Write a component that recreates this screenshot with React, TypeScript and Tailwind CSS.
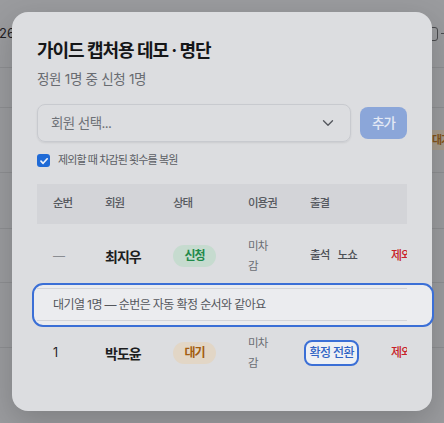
import React from "react";

function Check() {
  return (
    <span className="flex h-[13px] w-[13px] shrink-0 items-center justify-center rounded-[3px] bg-[#1f6ad6]">
      <svg width="10" height="10" viewBox="0 0 10 10" fill="none">
        <path d="M2 5.2 4.1 7.3 8.2 2.8" stroke="#eef2fa" strokeWidth="1.7" strokeLinecap="round" strokeLinejoin="round" />
      </svg>
    </span>
  );
}

function Chevron() {
  return (
    <svg width="18" height="18" viewBox="0 0 24 24" fill="none">
      <path d="m6 9 6 6 6-6" stroke="#55585e" strokeWidth="1.8" strokeLinecap="round" strokeLinejoin="round" />
    </svg>
  );
}

const grid = "grid grid-cols-[52px_68px_75px_62px_81px_60px] w-max";

export default function App() {
  return (
    <div className="relative h-[423px] w-[444px] overflow-hidden bg-[#9a9b9e] font-['Inter','Noto_Sans_CJK_KR',sans-serif]">
      {/* dimmed page underneath */}
      <div className="flex flex-col">
        <div className="flex h-[68px] items-center border-b border-[#8d8e91]">
          <span className="ml-[-1px] text-[13px] text-[#1f2023]">26</span>
          <span className="ml-auto h-[14px] w-[14px] shrink-0 rounded-[3px] border border-[#4a4b4e]" />
          <span className="ml-[3px] h-px w-[3px] shrink-0 bg-[#4a4b4e]" />
        </div>
        <div className="h-[40px] border-b border-[#8d8e91]" />
        <div className="flex h-[65px] items-center border-b border-[#8d8e91] pl-[426px]">
          <span className="flex h-[20px] w-[40px] shrink-0 items-center whitespace-nowrap rounded-[4px] bg-[#a69b8b] pl-[6px] text-[11px] font-semibold tracking-[-1px] text-[#83531a]">대기</span>
        </div>
        <div className="h-[56px] border-b border-[#8d8e91]" />
        <div className="h-[54px] border-b border-[#8d8e91]" />
        <div className="h-[65px] border-b border-[#8d8e91]" />
      </div>

      {/* modal */}
      <div className="absolute left-[12px] top-[12px] h-[399px] w-[420px] rounded-[16px] bg-[#dcdde0] px-[25px] pt-[26px] shadow-[0_10px_30px_rgba(0,0,0,0.18)]">
        {/* spotlight ring over the waitlist row */}
        <div className="pointer-events-none absolute left-[20px] top-[271px] h-[44px] w-[402px] rounded-[11px] border-[2.5px] border-[#3b6fd6] bg-[#ebecef]" />

        <h2 className="whitespace-nowrap text-[18px] font-bold leading-[25px] tracking-[-1px] text-[#151618]">
          가이드 캡처용 데모 · 명단
        </h2>
        <p className="mt-[7px] whitespace-nowrap text-[13.5px] leading-[18px] tracking-[-0.3px] text-[#686b71]">
          정원 1명 중 신청 1명
        </p>

        <div className="mt-[16px] flex items-center gap-[9px]">
          <div className="flex h-[38px] flex-1 items-center justify-between rounded-[8px] border border-[#c8cacf] pl-[13px] pr-[13px] shadow-[0_1px_2px_rgba(0,0,0,0.08)]">
            <span className="text-[13.5px] tracking-[-0.6px] text-[#6e7177]">회원 선택...</span>
            <Chevron />
          </div>
          <button className="h-[32px] w-[47px] rounded-[8px] bg-[#8ba6d9] text-[13.5px] font-medium tracking-[-0.8px] text-[#e3e9f5]">
            추가
          </button>
        </div>

        <label className="mt-[12px] flex h-[13px] items-center gap-[8px]">
          <Check />
          <span className="whitespace-nowrap text-[11px] tracking-[-0.9px] text-[#5b5e64]">제외할 때 차감된 횟수를 복원</span>
        </label>

        <div className="relative z-10 mt-[17px] w-[370px] overflow-hidden">
          {/* header */}
          <div className={`${grid} h-[40px] items-center bg-[#d3d4d8] text-[11.5px] font-medium tracking-[-1px] text-[#56595f]`}>
            <div className="pl-4">순번</div>
            <div className="pl-4">회원</div>
            <div className="pl-4">상태</div>
            <div className="pl-4">이용권</div>
            <div className="pl-4">출결</div>
            <div className="pl-4" />
          </div>

          {/* row 1 */}
          <div className={`${grid} h-[64px] items-center`}>
            <div className="pl-4 text-[12px] text-[#8a8d92]">—</div>
            <div className="pl-4 text-[14px] font-bold tracking-[-1px] text-[#1c1d20]">최지우</div>
            <div className="pl-4">
              <span className="flex h-[22px] w-[43px] items-center justify-center rounded-full bg-[#c6dbcf] text-[12px] font-semibold tracking-[-1px] text-[#1f8a4b]">신청</span>
            </div>
            <div className="pl-4">
              <div className="w-[25px] text-[11.5px] leading-[20px] tracking-[-0.8px] text-[#6b6e74]">미차감</div>
            </div>
            <div className="flex gap-[8px] pl-4 text-[11.5px] font-medium tracking-[-0.8px] text-[#4c4f55]">
              <span>출석</span>
              <span>노쇼</span>
            </div>
            <div className="pl-4 text-[12px] font-medium tracking-[-1px] text-[#c81f29]">제외</div>
          </div>

          {/* waitlist row */}
          <div className="flex h-[33px] items-center whitespace-nowrap border-y border-[#d3d4d8] pl-4 text-[12px] tracking-[-0.6px] text-[#54575d]">
            대기열 1명 — 순번은 자동 확정 순서와 같아요
          </div>

          {/* row 2 */}
          <div className={`${grid} h-[64px] items-center`}>
            <div className="pl-4 text-[12.5px] text-[#1f2023]">1</div>
            <div className="pl-4 text-[14px] font-bold tracking-[-1px] text-[#1c1d20]">박도윤</div>
            <div className="pl-4">
              <span className="flex h-[22px] w-[43px] items-center justify-center rounded-full bg-[#e2d6c6] text-[12px] font-semibold tracking-[-1px] text-[#a45d10]">대기</span>
            </div>
            <div className="pl-4">
              <div className="w-[25px] text-[11.5px] leading-[20px] tracking-[-0.8px] text-[#6b6e74]">미차감</div>
            </div>
            <div className="pl-[10px]">
              <button className="flex h-[26px] items-center whitespace-nowrap rounded-[8px] border-[2.5px] border-[#3b6fd6] bg-[#eef0f4] px-[3.5px] text-[12px] font-medium tracking-[-0.6px] text-[#2f63c5]">
                확정 전환
              </button>
            </div>
            <div className="pl-4 text-[12px] font-medium tracking-[-1px] text-[#c81f29]">제외</div>
          </div>
        </div>
      </div>
    </div>
  );
}
